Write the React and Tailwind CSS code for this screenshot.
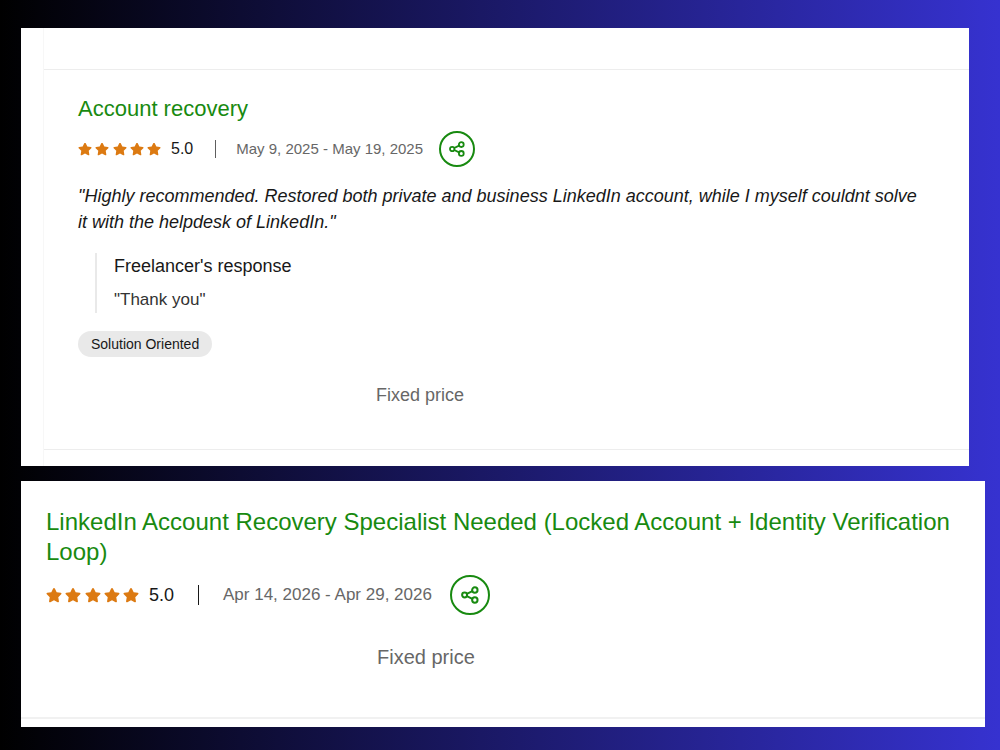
const STAR =
  "M12 1.5c.6 0 1 .3 1.300.8l2.700 5.500 6.100.9c1.100.2 1.500 1.400.7 2.200l-4.400 4.300 1 6.100c.2 1.100-.9 1.800-1.900 1.400L12 19.800l-5.500 2.900c-1 .4-2.100-.3-1.900-1.400l1-6.100L1.200 10.900c-.8-.8-.4-2 .7-2.200l6.100-.9 2.700-5.500c.3-.5.7-.8 1.300-.8z";

function Stars({ className, size }) {
  return (
    <div role="img" aria-label="Rated 5 out of 5" className={`flex shrink-0 justify-between ${className}`}>
      {[0, 1, 2, 3, 4].map((i) => (
        <svg key={i} viewBox="0 0 24 24" className={`${size} fill-[#dc7a12]`} aria-hidden="true">
          <path d={STAR} />
        </svg>
      ))}
    </div>
  );
}

function ShareButton({ className, icon }) {
  return (
    <button
      type="button"
      aria-label="Share"
      className={`flex shrink-0 items-center justify-center rounded-full border-2 border-[#188a10] text-[#188a10] ${className}`}
    >
      <svg viewBox="0 0 16 16" fill="none" stroke="currentColor" strokeWidth="1.8" className={icon} aria-hidden="true">
        <circle cx="3.200" cy="8" r="2.200" />
        <circle cx="12.300" cy="3.600" r="2.400" />
        <circle cx="12.300" cy="12.400" r="2.400" />
        <path d="M5.200 7L10.100 4.600M5.200 9L10.100 11.400" />
      </svg>
    </button>
  );
}

export default function App() {
  return (
    <main className="flex min-h-screen flex-col gap-[15px] bg-linear-to-r/srgb from-black to-[#3632d0] pt-7 pr-[15px] pb-[23px] pl-[21px] font-['Liberation_Sans',Arial,sans-serif] text-[#181818]">
      <article className="mr-4 bg-white pl-[22px]">
        <div className="border-l border-[#f7f7f7] pt-[41px] pb-4">
          <div className="border-y border-[#ededed] pt-[25px] pr-10 pb-10 pl-[34px]">
            <h2 className="text-[22px] leading-7">
              <a href="#account-recovery" className="text-[#188a10]">Account recovery</a>
            </h2>
            <div className="mt-2 flex h-9 items-center text-base">
              <Stars className="w-[83px]" size="size-3.5" />
              <span className="ml-2.5">5.0</span>
              <span className="ml-[22px] h-[18px] w-px bg-[#5e5e5e]" />
              <span className="ml-5 text-[15px] text-[#676767]">May 9, 2025 - May 19, 2025</span>
              <ShareButton className="ml-4 size-9" icon="size-4" />
            </div>
            <p className="mt-4 text-lg leading-[26px] italic">
              "Highly recommended. Restored both private and business LinkedIn account, while I myself couldnt solve it with the helpdesk of LinkedIn."
            </p>
            <div className="mt-[18px] ml-[17px] border-l-2 border-[#e9e9e9] pl-[17px]">
              <h3 className="text-lg leading-[26px]">Freelancer's response</h3>
              <p className="mt-2 text-[17px] leading-[26px] text-[#333]">"Thank you"</p>
            </div>
            <div className="mt-[18px] flex">
              <span className="rounded-full bg-[#e9e9e9] px-[13px] text-sm leading-[26px]">Solution Oriented</span>
            </div>
            <p className="mt-6 ml-[298px] text-lg leading-7 text-[#676767]">Fixed price</p>
          </div>
        </div>
      </article>

      <article className="bg-white pb-2">
        <div className="border-b-2 border-[#f1f1f1] pt-[26px] pr-2 pb-[46px] pl-[25px]">
          <h2 className="text-2xl leading-[30px]">
            <a href="#identity-verification" className="text-[#188a10]">
              LinkedIn Account Recovery Specialist Needed (Locked Account + Identity Verification Loop)
            </a>
          </h2>
          <div className="mt-2 flex h-10 items-center text-lg">
            <Stars className="w-[93px]" size="size-4" />
            <span className="ml-2.5">5.0</span>
            <span className="ml-6 h-5 w-px bg-[#181818]" />
            <span className="ml-6 text-[17px] text-[#676767]">Apr 14, 2026 - Apr 29, 2026</span>
            <ShareButton className="ml-[18px] size-10" icon="size-[18px]" />
          </div>
          <p className="mt-7 ml-[331px] text-xl leading-7 text-[#676767]">Fixed price</p>
        </div>
      </article>
    </main>
  );
}
